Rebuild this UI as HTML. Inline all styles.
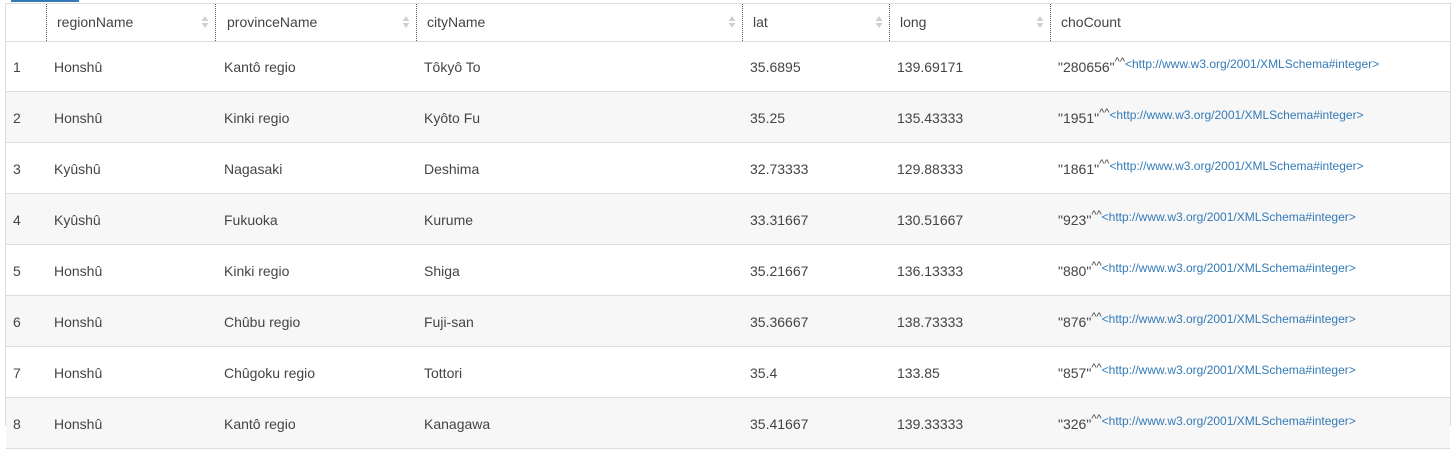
<!DOCTYPE html>
<html><head><meta charset="utf-8"><style>
body{margin:0;width:1452px;height:426px;overflow:hidden;background:#fff;font-family:"Liberation Sans",Arial,sans-serif;font-size:14px;color:#444;position:relative}
.tab{position:absolute;left:11px;top:0;width:68px;height:2px;background:#337ab7}
.top{position:absolute;left:5px;right:0;top:3px;height:1px;background:#ddd}
.lb{position:absolute;left:5px;top:3px;bottom:0;width:1px;background:#ddd}
.rb{position:absolute;left:1450px;top:3px;bottom:0;width:1px;background:#ddd}
.hdr{position:absolute;left:6px;top:4px;width:1444px;height:38px;border-bottom:1px solid #ddd;box-sizing:border-box}
.hd{position:absolute;top:14px;color:#444}
.div{position:absolute;top:4px;height:37px;border-left:1px dotted #555}
.sort{position:absolute;top:15px;width:8px;height:14px}
.row{position:absolute;left:6px;width:1444px;height:51px;border-bottom:1px solid #ddd;box-sizing:border-box}
.row.e{background:#f7f7f7}
.c{position:absolute;top:18px;white-space:nowrap}
.lnk{color:#337ab7;font-size:12px}
.sup{font-size:11px;position:relative;top:-3px}
.q{position:relative;top:4px}
</style></head><body>
<div class="tab"></div><div class="top"></div><div class="lb"></div><div class="rb"></div>
<div class="hdr"></div>
<div class="div" style="left:46px"></div><div class="div" style="left:215px"></div><div class="div" style="left:416px"></div><div class="div" style="left:742px"></div><div class="div" style="left:889px"></div><div class="div" style="left:1050px"></div>
<div class="hd" style="left:57px">regionName</div>
<div class="hd" style="left:227px">provinceName</div>
<div class="hd" style="left:427px">cityName</div>
<div class="hd" style="left:753px">lat</div>
<div class="hd" style="left:900px">long</div>
<div class="hd" style="left:1061px">choCount</div>
<svg class="sort" style="left:201px" viewBox="0 0 8 14"><path d="M4 1L7.5 6H0.5Z M4 13L7.5 8H0.5Z" fill="#d0d0d0"/></svg>
<svg class="sort" style="left:402px" viewBox="0 0 8 14"><path d="M4 1L7.5 6H0.5Z M4 13L7.5 8H0.5Z" fill="#d0d0d0"/></svg>
<svg class="sort" style="left:728px" viewBox="0 0 8 14"><path d="M4 1L7.5 6H0.5Z M4 13L7.5 8H0.5Z" fill="#d0d0d0"/></svg>
<svg class="sort" style="left:875px" viewBox="0 0 8 14"><path d="M4 1L7.5 6H0.5Z M4 13L7.5 8H0.5Z" fill="#d0d0d0"/></svg>
<svg class="sort" style="left:1036px" viewBox="0 0 8 14"><path d="M4 1L7.5 6H0.5Z M4 13L7.5 8H0.5Z" fill="#d0d0d0"/></svg>

<div class="row" style="top:41px"><span class="c" style="left:7px">1</span><span class="c" style="left:48px">Honshû</span><span class="c" style="left:218px">Kantô regio</span><span class="c" style="left:418px">Tôkyô To</span><span class="c" style="left:744px">35.6895</span><span class="c" style="left:891px">139.69171</span><span class="c" style="left:1052px;top:14px"><span class="q">"280656"</span><span class="sup">^^</span><span class="lnk">&lt;http://www.w3.org/2001/XMLSchema#integer&gt;</span></span></div>
<div class="row e" style="top:92px"><span class="c" style="left:7px">2</span><span class="c" style="left:48px">Honshû</span><span class="c" style="left:218px">Kinki regio</span><span class="c" style="left:418px">Kyôto Fu</span><span class="c" style="left:744px">35.25</span><span class="c" style="left:891px">135.43333</span><span class="c" style="left:1052px;top:14px"><span class="q">"1951"</span><span class="sup">^^</span><span class="lnk">&lt;http://www.w3.org/2001/XMLSchema#integer&gt;</span></span></div>
<div class="row" style="top:143px"><span class="c" style="left:7px">3</span><span class="c" style="left:48px">Kyûshû</span><span class="c" style="left:218px">Nagasaki</span><span class="c" style="left:418px">Deshima</span><span class="c" style="left:744px">32.73333</span><span class="c" style="left:891px">129.88333</span><span class="c" style="left:1052px;top:14px"><span class="q">"1861"</span><span class="sup">^^</span><span class="lnk">&lt;http://www.w3.org/2001/XMLSchema#integer&gt;</span></span></div>
<div class="row e" style="top:194px"><span class="c" style="left:7px">4</span><span class="c" style="left:48px">Kyûshû</span><span class="c" style="left:218px">Fukuoka</span><span class="c" style="left:418px">Kurume</span><span class="c" style="left:744px">33.31667</span><span class="c" style="left:891px">130.51667</span><span class="c" style="left:1052px;top:14px"><span class="q">"923"</span><span class="sup">^^</span><span class="lnk">&lt;http://www.w3.org/2001/XMLSchema#integer&gt;</span></span></div>
<div class="row" style="top:245px"><span class="c" style="left:7px">5</span><span class="c" style="left:48px">Honshû</span><span class="c" style="left:218px">Kinki regio</span><span class="c" style="left:418px">Shiga</span><span class="c" style="left:744px">35.21667</span><span class="c" style="left:891px">136.13333</span><span class="c" style="left:1052px;top:14px"><span class="q">"880"</span><span class="sup">^^</span><span class="lnk">&lt;http://www.w3.org/2001/XMLSchema#integer&gt;</span></span></div>
<div class="row e" style="top:296px"><span class="c" style="left:7px">6</span><span class="c" style="left:48px">Honshû</span><span class="c" style="left:218px">Chûbu regio</span><span class="c" style="left:418px">Fuji-san</span><span class="c" style="left:744px">35.36667</span><span class="c" style="left:891px">138.73333</span><span class="c" style="left:1052px;top:14px"><span class="q">"876"</span><span class="sup">^^</span><span class="lnk">&lt;http://www.w3.org/2001/XMLSchema#integer&gt;</span></span></div>
<div class="row" style="top:347px"><span class="c" style="left:7px">7</span><span class="c" style="left:48px">Honshû</span><span class="c" style="left:218px">Chûgoku regio</span><span class="c" style="left:418px">Tottori</span><span class="c" style="left:744px">35.4</span><span class="c" style="left:891px">133.85</span><span class="c" style="left:1052px;top:14px"><span class="q">"857"</span><span class="sup">^^</span><span class="lnk">&lt;http://www.w3.org/2001/XMLSchema#integer&gt;</span></span></div>
<div class="row e" style="top:398px"><span class="c" style="left:7px">8</span><span class="c" style="left:48px">Honshû</span><span class="c" style="left:218px">Kantô regio</span><span class="c" style="left:418px">Kanagawa</span><span class="c" style="left:744px">35.41667</span><span class="c" style="left:891px">139.33333</span><span class="c" style="left:1052px;top:14px"><span class="q">"326"</span><span class="sup">^^</span><span class="lnk">&lt;http://www.w3.org/2001/XMLSchema#integer&gt;</span></span></div>
</body></html>
